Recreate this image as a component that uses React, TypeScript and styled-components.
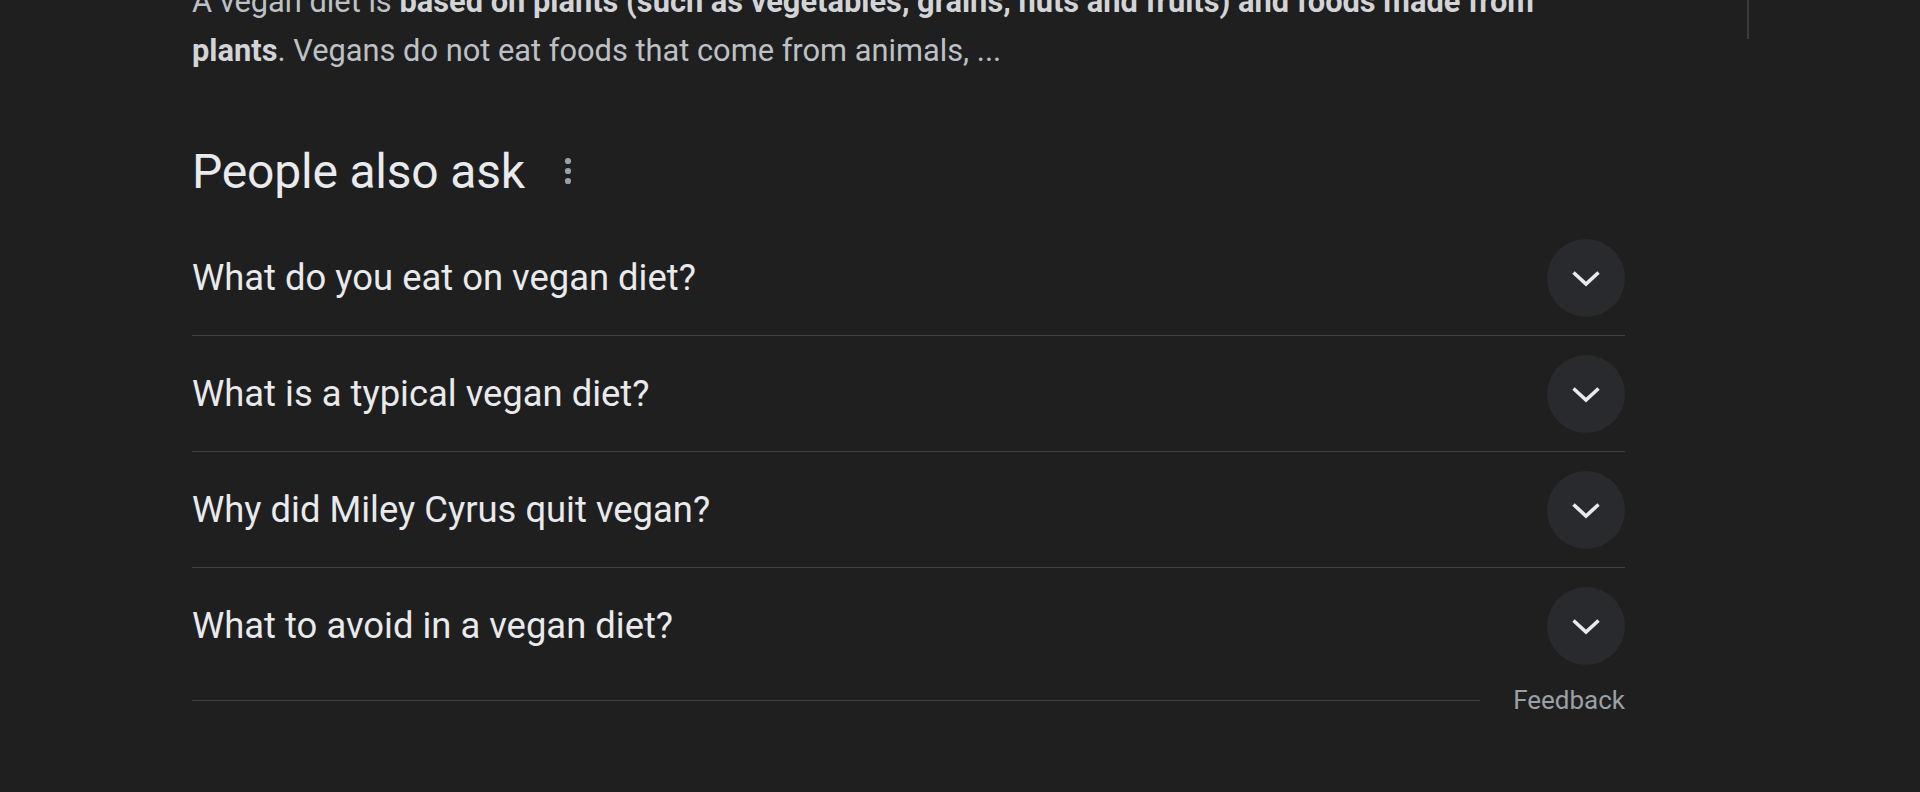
import styled, { createGlobalStyle } from "styled-components";

const GlobalStyle = createGlobalStyle`
  html, body {
    margin: 0;
    padding: 0;
    background: #1f1f1f;
  }
  body {
    font-family: Roboto, "Liberation Sans", Arial, sans-serif;
    overflow: hidden;
  }
`;

const Page = styled.div`
  display: flex;
  align-items: flex-start;
  height: 792px;
  overflow: hidden;
`;

const Main = styled.div`
  width: 1433px;
  margin-left: 192px;
  display: flex;
  flex-direction: column;
`;

const SideRule = styled.div`
  margin-left: 122px;
  width: 2px;
  height: 39px;
  background: #3a3b3e;
`;

const Snippet = styled.div`
  margin-top: -23px;
  font-size: 30.8px;
  line-height: 49px;
  color: #bdc1c6;
  b {
    font-weight: 700;
    color: #d2d4d7;
  }
`;

const HeadingRow = styled.div`
  margin-top: 68px;
  height: 56px;
  display: flex;
  align-items: center;
`;

const Title = styled.h2`
  margin: 0;
  font-size: 48px;
  font-weight: 400;
  color: #e8eaed;
  letter-spacing: -0.2px;
`;

const MenuButton = styled.div`
  margin-left: 39px;
  display: flex;
  align-items: center;
`;

const List = styled.div`
  margin-top: 21px;
  display: flex;
  flex-direction: column;
`;

const Row = styled.div<{ $last?: boolean }>`
  height: 115px;
  display: flex;
  align-items: center;
  justify-content: space-between;
  border-bottom: ${(p) => (p.$last ? "none" : "1px solid #3c4043")};
`;

const Question = styled.span`
  font-size: 36.4px;
  color: #e8eaed;
`;

const Chevron = styled.div`
  width: 78px;
  height: 78px;
  border-radius: 50%;
  background: #292a2d;
  display: flex;
  align-items: center;
  justify-content: center;
  svg {
    display: block;
  }
`;

const Footer = styled.div`
  height: 34px;
  display: flex;
  align-items: center;
`;

const FooterLine = styled.div`
  flex: 1;
  height: 1px;
  background: #3c4043;
`;

const Feedback = styled.span`
  margin-left: 33px;
  font-size: 26px;
  line-height: 34px;
  color: #9aa0a6;
`;

const questions = [
  "What do you eat on vegan diet?",
  "What is a typical vegan diet?",
  "Why did Miley Cyrus quit vegan?",
  "What to avoid in a vegan diet?",
];

export default function App() {
  return (
    <Page>
      <GlobalStyle />
      <Main>
        <Snippet>
          A vegan diet is <b>based on plants (such as vegetables, grains, nuts and fruits) and foods made from</b>
          <br />
          <b>plants</b>. Vegans do not eat foods that come from animals, ...
        </Snippet>
        <HeadingRow>
          <Title>People also ask</Title>
          <MenuButton>
            <svg width="8" height="28" viewBox="0 0 8 28">
              <circle cx="4" cy="4" r="3.1" fill="#9aa0a6" />
              <circle cx="4" cy="14" r="3.1" fill="#9aa0a6" />
              <circle cx="4" cy="24" r="3.1" fill="#9aa0a6" />
            </svg>
          </MenuButton>
        </HeadingRow>
        <List>
          {questions.map((q, i) => (
            <Row key={q} $last={i === questions.length - 1}>
              <Question>{q}</Question>
              <Chevron>
                <svg width="30" height="18" viewBox="0 0 30 18">
                  <polyline
                    points="2.5,3.5 15,15 27.5,3.5"
                    fill="none"
                    stroke="#e8eaed"
                    strokeWidth="3.6"
                  />
                </svg>
              </Chevron>
            </Row>
          ))}
        </List>
        <Footer>
          <FooterLine />
          <Feedback>Feedback</Feedback>
        </Footer>
      </Main>
      <SideRule />
    </Page>
  );
}
